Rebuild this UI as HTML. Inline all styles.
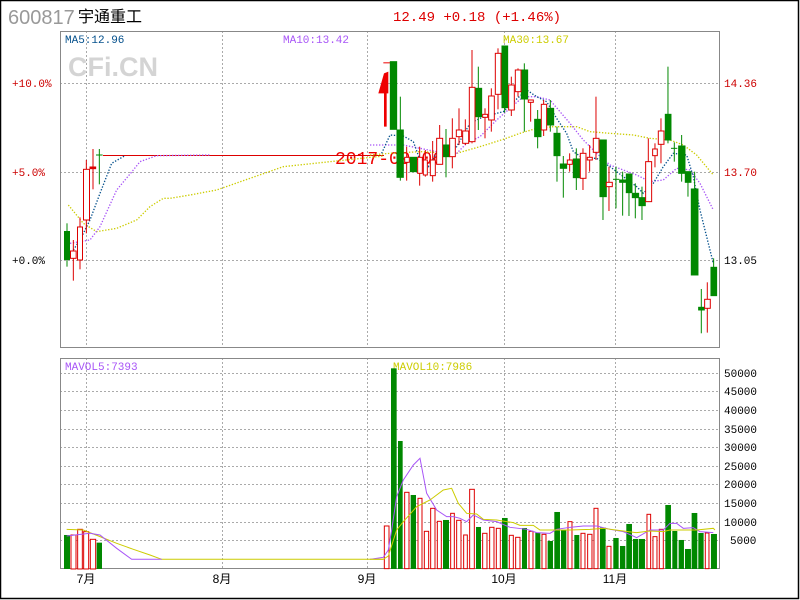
<!DOCTYPE html>
<html><head><meta charset="utf-8"><style>
html,body{margin:0;padding:0;background:#fff;}
#w{position:relative;width:800px;height:600px;overflow:hidden;}
svg{position:absolute;left:0;top:0;}
</style></head><body><div id="w">
<svg width="800" height="600" xmlns="http://www.w3.org/2000/svg" font-family="Liberation Mono, monospace">
<rect x="0.5" y="0.5" width="798" height="598" fill="#fff" stroke="#000" stroke-width="1.5"/>
<text x="8" y="24" font-family="Liberation Sans, sans-serif" font-size="20" fill="#999">600817</text>
<text x="78" y="22" font-family="Liberation Sans, 'Noto Sans CJK SC', sans-serif" font-size="16" fill="#000">宇通重工</text>
<text x="393" y="21" font-size="14" fill="#d00">12.49 +0.18 (+1.46%)</text>
<!-- grids -->
<g stroke="#aaa" stroke-dasharray="2,2" stroke-width="1">
<line x1="86.5" y1="31" x2="86.5" y2="348"/><line x1="222.5" y1="31" x2="222.5" y2="348"/><line x1="367.5" y1="31" x2="367.5" y2="348"/><line x1="504.5" y1="31" x2="504.5" y2="348"/><line x1="615.5" y1="31" x2="615.5" y2="348"/>
<line x1="60" y1="83.5" x2="720" y2="83.5"/><line x1="60" y1="172.5" x2="720" y2="172.5"/><line x1="60" y1="260.5" x2="720" y2="260.5"/>
<line x1="86.5" y1="358" x2="86.5" y2="569"/><line x1="222.5" y1="358" x2="222.5" y2="569"/><line x1="367.5" y1="358" x2="367.5" y2="569"/><line x1="504.5" y1="358" x2="504.5" y2="569"/><line x1="615.5" y1="358" x2="615.5" y2="569"/>
<line x1="60" y1="373.5" x2="720" y2="373.5"/><line x1="60" y1="391.5" x2="720" y2="391.5"/><line x1="60" y1="410.5" x2="720" y2="410.5"/><line x1="60" y1="429.5" x2="720" y2="429.5"/><line x1="60" y1="447.5" x2="720" y2="447.5"/><line x1="60" y1="466.5" x2="720" y2="466.5"/><line x1="60" y1="484.5" x2="720" y2="484.5"/><line x1="60" y1="503.5" x2="720" y2="503.5"/><line x1="60" y1="522.5" x2="720" y2="522.5"/><line x1="60" y1="540.5" x2="720" y2="540.5"/>
</g>
<rect x="60.5" y="31.5" width="659" height="316" fill="none" stroke="#888"/>
<rect x="60.5" y="358.5" width="659" height="210" fill="none" stroke="#888"/>
<text x="68" y="76" font-family="Liberation Sans, sans-serif" font-weight="bold" font-size="27" fill="#d4d4d4">CFi.CN</text>
<text x="65" y="43" font-size="11" fill="#04508c">MA5:12.96</text>
<text x="283" y="43" font-size="11" fill="#a855f7">MA10:13.42</text>
<text x="503" y="43" font-size="11" fill="#cccc00">MA30:13.67</text>
<text x="65" y="370" font-size="11" fill="#a855f7">MAVOL5:7393</text>
<text x="393" y="370" font-size="11" fill="#cccc00">MAVOL10:7986</text>
<g font-size="11"><text x="12" y="87" fill="#c00">+10.0%</text><text x="12" y="176" fill="#c00">+5.0%</text><text x="12" y="264" fill="#000">+0.0%</text>
<text x="724" y="87" fill="#c00">14.36</text><text x="724" y="176" fill="#c00">13.70</text><text x="724" y="264" fill="#000">13.05</text></g>
<g font-size="11" fill="#000"><text x="724" y="377">50000</text><text x="724" y="395">45000</text><text x="724" y="414">40000</text><text x="724" y="433">35000</text><text x="724" y="451">30000</text><text x="724" y="470">25000</text><text x="724" y="488">20000</text><text x="724" y="507">15000</text><text x="724" y="526">10000</text><text x="730" y="544">5000</text></g>
<g font-family="Liberation Sans, 'Noto Sans CJK SC', sans-serif" font-size="12" fill="#000" text-anchor="middle"><text x="86" y="583">7月</text><text x="222" y="583">8月</text><text x="367" y="583">9月</text><text x="504" y="583">10月</text><text x="615" y="583">11月</text></g>
<text x="335" y="164" font-size="18" fill="#e00">2017-09-06</text>
<line x1="103" y1="155.5" x2="384" y2="155.5" stroke="#d00"/>
<!-- left price candles zoom4 coords -->
<g transform="translate(50,130) scale(0.3333)" stroke-width="3">
<polyline fill="none" stroke="#cccc00" stroke-width="4" stroke-dasharray="4,5" points="55,225 100,280 140,305 200,295 260,270 300,230 340,205 360,205 420,195 500,180 700,110 1000,78"/>
<polyline fill="none" stroke="#a855f7" stroke-width="4" stroke-dasharray="4,5" points="60,340 120,330 150,290 200,180 250,120 270,95 320,77 480,75"/>
<polyline fill="none" stroke="#04508c" stroke-width="4" stroke-dasharray="4,5" points="50,390 90,330 120,270 150,190 185,100 225,77"/>
<line x1="51" y1="280" x2="51" y2="410" stroke="#080"/><rect x="42" y="303" width="18" height="87" fill="#080" stroke="none"/>
<line x1="70" y1="330" x2="70" y2="452" stroke="#d00"/><rect x="61.5" y="363" width="17" height="22" fill="#fff" stroke="#d00"/>
<line x1="90" y1="262" x2="90" y2="418" stroke="#d00"/><rect x="82.5" y="291" width="15" height="99" fill="#fff" stroke="#d00"/>
<line x1="109" y1="90" x2="109" y2="310" stroke="#d00"/><rect x="100.5" y="118" width="18" height="152" fill="#fff" stroke="#d00"/>
<line x1="129" y1="57" x2="129" y2="178" stroke="#d00"/><rect x="120" y="111" width="17" height="5" fill="#d00" stroke="#d00"/>
<line x1="148" y1="57" x2="148" y2="163" stroke="#080"/><line x1="138" y1="75" x2="158" y2="75" stroke="#080"/>
</g>
<!-- right price zoom2 coords -->
<g transform="translate(370,30) scale(0.3333)" stroke-width="3">
<polygon points="40,97 60,97 60,100 40,100" fill="#e00"/>
<polygon points="42,130 55,125 55,190 50,190 50,290 42,290 42,190 25,190" fill="#e00"/>
<polyline fill="none" stroke="#cccc00" stroke-width="4" stroke-dasharray="4,5" points="0,375 60,370 150,365 260,370 330,350 400,328 450,310 500,295 550,290 620,290 660,305 720,310 790,315 840,325 900,330 940,345 980,375 1030,435"/>
<polyline fill="none" stroke="#a855f7" stroke-width="4" stroke-dasharray="4,5" points="0,345 60,345 100,345 150,355 200,365 260,370 290,340 330,320 380,270 420,235 460,200 500,200 540,210 570,245 600,280 640,330 680,370 720,405 760,420 800,435 840,455 880,450 920,415 960,420 990,460 1030,540"/>
<polyline fill="none" stroke="#04508c" stroke-width="4" stroke-dasharray="4,5" points="35,370 60,315 100,318 130,335 150,390 175,410 200,370 260,350 300,280 330,265 360,255 400,245 420,225 470,180 500,200 530,215 560,265 590,310 610,365 640,385 680,385 720,410 760,440 800,470 820,490 850,460 880,410 910,370 950,375 970,440 990,540 1010,620 1030,700"/>
<g stroke="#080" fill="#080">
<rect x="61" y="95" width="19" height="203"/>
<line x1="91" y1="200" x2="91" y2="452"/><rect x="81" y="300" width="19" height="142"/>
<rect x="121" y="382" width="19" height="43"/>
<line x1="228" y1="297" x2="228" y2="442"/><rect x="219" y="345" width="19" height="35"/>
<line x1="325" y1="110" x2="325" y2="300"/><rect x="316" y="175" width="19" height="85"/>
<line x1="404" y1="48" x2="404" y2="248"/><rect x="396" y="48" width="17" height="185"/>
<line x1="463" y1="100" x2="463" y2="305"/><rect x="454" y="120" width="19" height="87"/>
<line x1="503" y1="240" x2="503" y2="355"/><rect x="494" y="268" width="19" height="52"/>
<line x1="541" y1="210" x2="541" y2="305"/><rect x="532" y="235" width="19" height="50"/>
<line x1="561" y1="290" x2="561" y2="455"/><rect x="552" y="310" width="18" height="67"/>
<line x1="580" y1="378" x2="580" y2="503"/><rect x="571" y="402" width="19" height="13"/>
<line x1="619" y1="355" x2="619" y2="480"/><rect x="610" y="387" width="19" height="56"/>
<line x1="699" y1="330" x2="699" y2="570"/><rect x="690" y="330" width="19" height="170"/>
<line x1="738" y1="410" x2="738" y2="535"/><line x1="729" y1="448" x2="748" y2="448"/>
<line x1="758" y1="425" x2="758" y2="557"/><rect x="749" y="450" width="19" height="7"/>
<line x1="777" y1="432" x2="777" y2="558"/><rect x="769" y="432" width="17" height="56"/>
<line x1="796" y1="460" x2="796" y2="565"/><rect x="787" y="490" width="19" height="13"/>
<line x1="816" y1="470" x2="816" y2="570"/><rect x="807" y="503" width="19" height="24"/>
<line x1="894" y1="110" x2="894" y2="340"/><rect x="886" y="253" width="17" height="77"/>
<line x1="913" y1="337" x2="913" y2="395"/><line x1="903" y1="355" x2="922" y2="355"/>
<line x1="935" y1="315" x2="935" y2="455"/><rect x="926" y="348" width="19" height="82"/>
<line x1="954" y1="425" x2="954" y2="500"/><rect x="946" y="425" width="17" height="32"/>
<line x1="974" y1="425" x2="974" y2="735"/><rect x="964" y="477" width="20" height="258"/>
<line x1="994" y1="777" x2="994" y2="910"/><rect x="986" y="832" width="17" height="8"/>
<line x1="1031" y1="685" x2="1031" y2="797"/><rect x="1023" y="712" width="17" height="85"/>
</g>
<g stroke="#d00" fill="#fff">
<line x1="110" y1="350" x2="110" y2="452"/><rect x="104" y="382" width="14" height="15"/>
<line x1="149" y1="350" x2="149" y2="467"/><rect x="143" y="382" width="14" height="48"/>
<line x1="166" y1="360" x2="166" y2="440"/><rect x="160" y="390" width="12" height="45"/>
<line x1="188" y1="333" x2="188" y2="455"/><rect x="181" y="390" width="15" height="47"/>
<line x1="209" y1="285" x2="209" y2="403"/><rect x="200" y="325" width="18" height="78"/>
<line x1="247" y1="265" x2="247" y2="415"/><rect x="239" y="325" width="17" height="55"/>
<line x1="267" y1="235" x2="267" y2="345"/><rect x="259" y="300" width="16" height="20"/>
<line x1="286" y1="268" x2="286" y2="345"/><rect x="278" y="303" width="18" height="37"/>
<line x1="306" y1="60" x2="306" y2="340"/><rect x="298" y="172" width="17" height="163"/>
<line x1="345" y1="235" x2="345" y2="325"/><rect x="338" y="253" width="15" height="9"/>
<line x1="364" y1="175" x2="364" y2="305"/><rect x="356" y="198" width="17" height="72"/>
<line x1="384" y1="55" x2="384" y2="238"/><rect x="376" y="70" width="17" height="123"/>
<line x1="424" y1="140" x2="424" y2="258"/><rect x="416" y="165" width="17" height="75"/>
<line x1="444" y1="115" x2="444" y2="200"/><rect x="436" y="120" width="17" height="65"/>
<line x1="482" y1="210" x2="482" y2="275"/><rect x="475" y="210" width="15" height="7"/>
<line x1="521" y1="210" x2="521" y2="318"/><rect x="514" y="223" width="16" height="77"/>
<line x1="599" y1="370" x2="599" y2="425"/><rect x="592" y="390" width="15" height="13"/>
<line x1="639" y1="355" x2="639" y2="480"/><rect x="631" y="370" width="17" height="75"/>
<line x1="659" y1="345" x2="659" y2="425"/><rect x="652" y="382" width="15" height="8"/>
<line x1="678" y1="200" x2="678" y2="390"/><rect x="670" y="325" width="17" height="42"/>
<line x1="717" y1="410" x2="717" y2="543"/><rect x="709" y="457" width="18" height="13"/>
<line x1="835" y1="325" x2="835" y2="515"/><rect x="827" y="395" width="18" height="120"/>
<line x1="855" y1="340" x2="855" y2="412"/><rect x="848" y="357" width="14" height="20"/>
<line x1="873" y1="265" x2="873" y2="400"/><rect x="865" y="303" width="17" height="40"/>
<line x1="1012" y1="757" x2="1012" y2="908"/><rect x="1004" y="808" width="17" height="27"/>
</g>
</g>
<!-- left volume zoom5 coords -->
<g transform="translate(50,350) scale(0.3333)" stroke-width="3">
<rect x="42" y="555" width="18" height="102" fill="#080"/>
<g fill="#fff" stroke="#d00"><rect x="63" y="555" width="15" height="102"/><rect x="83" y="538" width="14" height="119"/><rect x="101" y="545" width="15" height="112"/><rect x="121" y="568" width="16" height="89"/></g>
<rect x="140" y="578" width="16" height="79" fill="#080"/>
<polyline fill="none" stroke="#cccc00" stroke-width="3" points="50,538 100,540 150,560 200,580 250,598 300,615 335,628 1000,628"/>
<polyline fill="none" stroke="#a855f7" stroke-width="3" points="50,558 120,550 150,555 200,595 245,628 335,628"/>
</g>
<!-- right volume zoom3 coords -->
<g transform="translate(370,350) scale(0.3333)" stroke-width="3">
<g fill="#080">
<rect x="63" y="55" width="17" height="602"/><rect x="84" y="273" width="14" height="384"/><rect x="122" y="435" width="16" height="222"/><rect x="219" y="510" width="18" height="147"/><rect x="318" y="531" width="15" height="126"/><rect x="396" y="504" width="17" height="153"/><rect x="456" y="534" width="15" height="123"/><rect x="496" y="548" width="15" height="109"/><rect x="533" y="573" width="16" height="84"/><rect x="553" y="486" width="17" height="171"/><rect x="573" y="540" width="16" height="117"/><rect x="613" y="555" width="15" height="102"/><rect x="690" y="533" width="17" height="124"/><rect x="730" y="564" width="16" height="93"/><rect x="750" y="588" width="16" height="69"/><rect x="769" y="522" width="17" height="135"/><rect x="789" y="567" width="16" height="90"/><rect x="807" y="567" width="18" height="90"/><rect x="886" y="465" width="17" height="192"/><rect x="907" y="543" width="15" height="114"/><rect x="926" y="570" width="16" height="87"/><rect x="945" y="597" width="18" height="60"/><rect x="965" y="489" width="17" height="168"/><rect x="985" y="549" width="16" height="108"/><rect x="1023" y="552" width="18" height="105"/>
</g>
<g fill="#fff" stroke="#d00">
<rect x="43" y="528" width="14" height="128"/><rect x="104" y="427" width="13" height="229"/><rect x="144" y="445" width="12" height="211"/><rect x="163" y="544" width="13" height="112"/><rect x="182" y="475" width="13" height="181"/><rect x="202" y="514" width="12" height="142"/><rect x="242" y="490" width="11" height="166"/><rect x="260" y="511" width="13" height="145"/><rect x="281" y="555" width="11" height="101"/><rect x="299" y="418" width="14" height="238"/><rect x="338" y="550" width="13" height="106"/><rect x="359" y="532" width="13" height="124"/><rect x="379" y="535" width="12" height="121"/><rect x="418" y="556" width="12" height="100"/><rect x="437" y="562" width="13" height="94"/><rect x="477" y="544" width="12" height="112"/><rect x="516" y="553" width="12" height="103"/><rect x="594" y="515" width="12" height="141"/><rect x="633" y="550" width="12" height="106"/><rect x="653" y="553" width="13" height="103"/><rect x="672" y="475" width="12" height="181"/><rect x="711" y="589" width="12" height="67"/><rect x="831" y="493" width="11" height="163"/><rect x="849" y="560" width="12" height="96"/><rect x="868" y="538" width="12" height="118"/><rect x="1006" y="549" width="11" height="107"/>
</g>
<polyline fill="none" stroke="#a855f7" stroke-width="3" points="0,628 40,622 55,600 65,540 80,440 100,390 130,345 150,325 170,430 200,480 230,500 250,500 270,505 290,515 310,495 340,510 380,515 420,532 470,538 500,548 540,550 560,538 600,532 640,528 680,528 720,538 760,545 800,563 840,540 880,540 900,520 920,520 940,535 970,533 990,545 1030,548"/>
<polyline fill="none" stroke="#cccc00" stroke-width="3" points="0,628 40,628 55,618 80,540 100,515 140,470 180,450 220,420 245,415 265,460 290,490 320,492 340,508 380,510 430,518 450,526 490,526 510,540 560,540 600,540 660,538 700,535 760,543 800,548 840,543 880,545 900,540 940,540 980,540 1030,535 1035,540"/>
</g>
</svg>
</div></body></html>
